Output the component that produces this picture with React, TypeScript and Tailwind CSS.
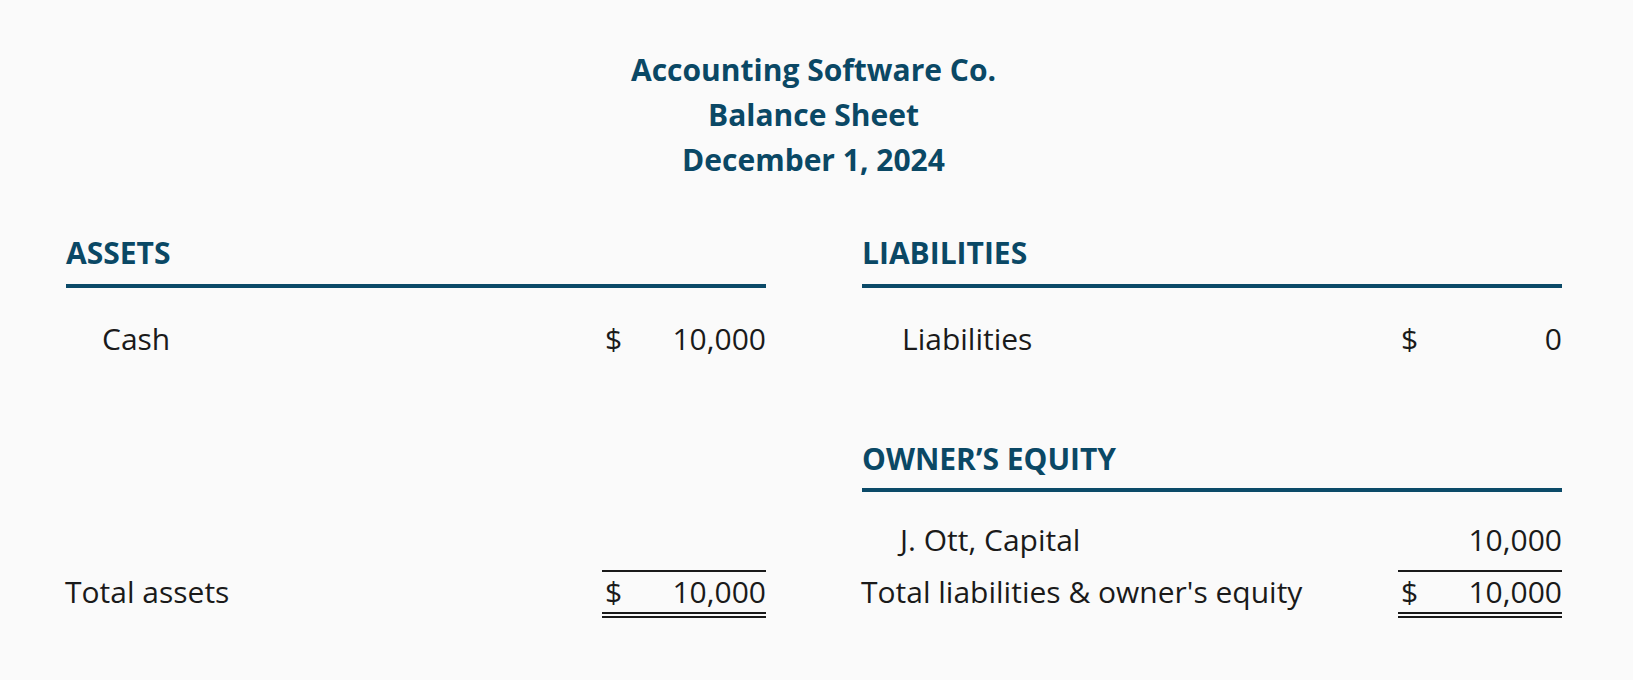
import React from "react";

const navy = "text-[#0a4865]";

function Rule() {
  return <div className="h-[4px] bg-[#0b4a68]" />;
}

function Header({ children, className = "" }: { children: React.ReactNode; className?: string }) {
  return (
    <div className={`font-bold text-[30px] leading-[36px] ${navy} ${className}`}>{children}</div>
  );
}

function Amount({ dollar, value }: { dollar?: boolean; value: string }) {
  return (
    <div className="w-[164px] flex justify-between pl-[3px]">
      <span className={dollar ? "" : "invisible"}>$</span>
      <span>{value}</span>
    </div>
  );
}

function Row({
  label,
  dollar,
  value,
  indent,
}: {
  label: string;
  dollar?: boolean;
  value: string;
  indent: string;
}) {
  return (
    <div className="flex justify-between leading-[36px]">
      <span className={indent}>{label}</span>
      <Amount dollar={dollar} value={value} />
    </div>
  );
}

function TotalRow({ label }: { label: string }) {
  return (
    <div className="flex justify-between leading-[36px]">
      <span className="pt-[4px] -ml-[1px]">{label}</span>
      <div className="w-[164px] flex justify-between pl-[3px] border-t-2 border-[#1a1a1a] pt-[2px] pb-[2px] border-b-[6px] border-double">
        <span>$</span>
        <span>10,000</span>
      </div>
    </div>
  );
}

export default function App() {
  return (
    <div
      className="w-[1633px] h-[680px] bg-[#fafafa] text-[#1a1a1a] text-[30px] overflow-hidden"
      style={{ fontFamily: '"Open Sans", "Noto Sans", sans-serif' }}
    >
      <div className={`pt-[47px] pr-[6px] text-center font-bold text-[30px] leading-[45px] ${navy}`}>
        <div>Accounting Software Co.</div>
        <div>Balance Sheet</div>
        <div>December 1, 2024</div>
      </div>
      <div className="ml-[66px] mt-[53px] grid grid-cols-[700px_700px] gap-x-[96px]">
        <div>
          <Header>ASSETS</Header>
          <div className="mt-[13px]">
            <Rule />
          </div>
          <div className="mt-[33px]">
            <Row label="Cash" dollar value="10,000" indent="pl-[36px]" />
          </div>
        </div>
        <div>
          <Header>LIABILITIES</Header>
          <div className="mt-[13px]">
            <Rule />
          </div>
          <div className="mt-[33px]">
            <Row label="Liabilities" dollar value="0" indent="pl-[40px]" />
          </div>
          <Header className="mt-[84px]">OWNER&#8217;S EQUITY</Header>
          <div className="mt-[11px]">
            <Rule />
          </div>
          <div className="mt-[30px]">
            <Row label="J. Ott, Capital" value="10,000" indent="pl-[38px]" />
          </div>
        </div>
        <div className="mt-[12px]">
          <TotalRow label="Total assets" />
        </div>
        <div className="mt-[12px]">
          <TotalRow label="Total liabilities & owner's equity" />
        </div>
      </div>
    </div>
  );
}
